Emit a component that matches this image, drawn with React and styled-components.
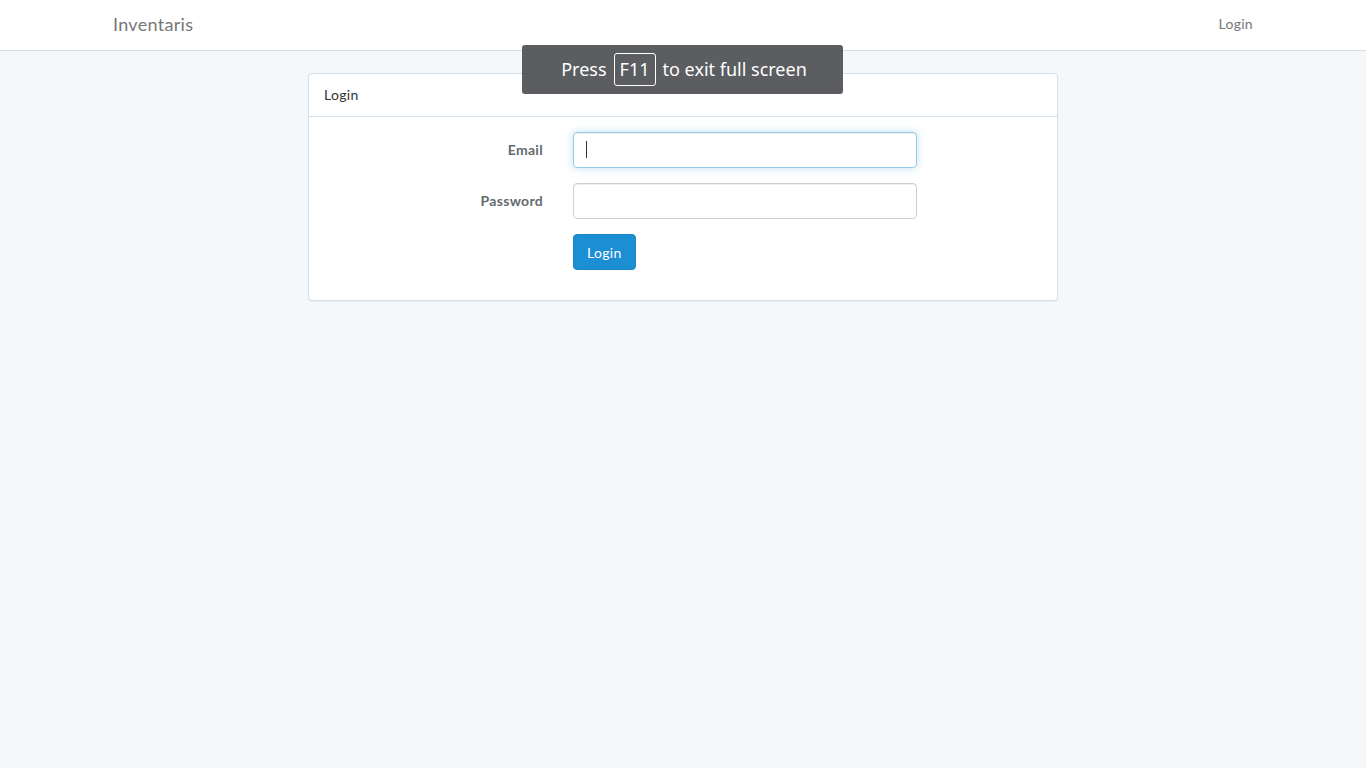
import React from 'react';
import styled, { createGlobalStyle } from 'styled-components';

const GlobalStyle = createGlobalStyle`
  * { box-sizing: border-box; }
  body {
    margin: 0;
    background-color: #f5f8fa;
    font-family: Lato, "Open Sans", sans-serif;
    font-size: 14px;
    line-height: 1.6;
    color: #636b6f;
    letter-spacing: 0.3px;
  }
`

const Page = styled.div`
  min-height: 100vh;
  position: relative;
`

const Navbar = styled.nav`
  height: 51px;
  background-color: #fff;
  border-bottom: 1px solid #d3e0e9;
`

const Container = styled.div`
  width: 1170px;
  margin: 0 auto;
  padding: 0 15px;
  display: flex;
  align-items: center;
  justify-content: space-between;
  height: 100%;
`

const Brand = styled.a`
  font-size: 18px;
  color: #777;
  text-decoration: none;
  line-height: 20px;
  margin-top: -2px;
`

const NavLink = styled.a`
  color: #777;
  text-decoration: none;
  font-size: 14px;
  margin-top: -1px;
`

const Main = styled.div`
  width: 780px;
  margin: 22px auto 0;
  padding: 0 15px;
`

const Panel = styled.div`
  background: #fff;
  border: 1px solid #d3e0e9;
  border-radius: 4px;
  box-shadow: 0 1px 1px rgba(0, 0, 0, 0.05);
`

const PanelHeading = styled.div`
  padding: 10px 15px;
  height: 43px;
  color: #333;
  font-size: 14px;
  line-height: 22px;
  border-bottom: 1px solid #d3e0e9;
`

const PanelBody = styled.div`
  padding: 15px 15px 15px;
`

const FormGroup = styled.div`
  display: grid;
  grid-template-columns: 249px 374px;
  margin: 0 -15px 15px;
  align-items: center;
`

const Label = styled.label`
  text-align: right;
  padding: 0 15px;
  font-weight: 700;
  color: #636b6f;
`

const Field = styled.div`
  padding: 0 15px;
  grid-column: 2;
  position: relative;

  ${p => p.$caret && `
    &::after {
      content: '';
      position: absolute;
      left: 28px;
      top: 9px;
      width: 1px;
      height: 17px;
      background: #333;
    }
  `}
`

const Input = styled.input`
  display: block;
  width: 100%;
  height: 36px;
  padding: 6px 12px;
  font-size: 14px;
  font-family: inherit;
  border: 1px solid ${p => (p.$focus ? '#98cbe8' : '#ccd0d2')};
  border-radius: 4px;
  background: #fff;
  outline: none;
  box-shadow: inset 0 1px 1px rgba(0, 0, 0, 0.075)
    ${p => (p.$focus ? ', 0 0 8px rgba(152, 203, 232, 0.6)' : '')};
  caret-color: transparent;
`

const Button = styled.button`
  height: 36px;
  padding: 6px 13px;
  font-family: inherit;
  font-size: 14px;
  letter-spacing: 0.3px;
  color: #fff;
  background-color: #1c8ed4;
  border: 1px solid #1a84c4;
  border-radius: 4px;
`

const FullscreenNote = styled.div`
  position: absolute;
  left: 522px;
  top: 45px;
  width: 321px;
  height: 49px;
  border-radius: 3px;
  background: rgba(70, 71, 75, 0.88);
  color: #fff;
  font-family: "Noto Sans", "DejaVu Sans", sans-serif;
  font-size: 18px;
  letter-spacing: 0;
  display: flex;
  align-items: center;
  justify-content: center;
  gap: 7px;
  padding-left: 3px;
`

const Key = styled.span`
  border: 1px solid #fff;
  border-radius: 3px;
  padding: 0 5px;
  height: 33px;
  line-height: 31px;
`

export default function App() {
  return (
    <Page>
      <GlobalStyle />
      <Navbar>
        <Container>
          <Brand href="#">Inventaris</Brand>
          <NavLink href="#">Login</NavLink>
        </Container>
      </Navbar>

      <Main>
        <Panel>
          <PanelHeading>Login</PanelHeading>
          <PanelBody>
            <FormGroup>
              <Label htmlFor="email">Email</Label>
              <Field $caret>
                <Input id="email" type="email" $focus />
              </Field>
            </FormGroup>
            <FormGroup>
              <Label htmlFor="password">Password</Label>
              <Field>
                <Input id="password" type="password" />
              </Field>
            </FormGroup>
            <FormGroup>
              <Field>
                <Button type="submit">Login</Button>
              </Field>
            </FormGroup>
          </PanelBody>
        </Panel>
      </Main>

      <FullscreenNote>
        <span>Press</span>
        <Key>F11</Key>
        <span>to exit full screen</span>
      </FullscreenNote>
    </Page>
  );
}
